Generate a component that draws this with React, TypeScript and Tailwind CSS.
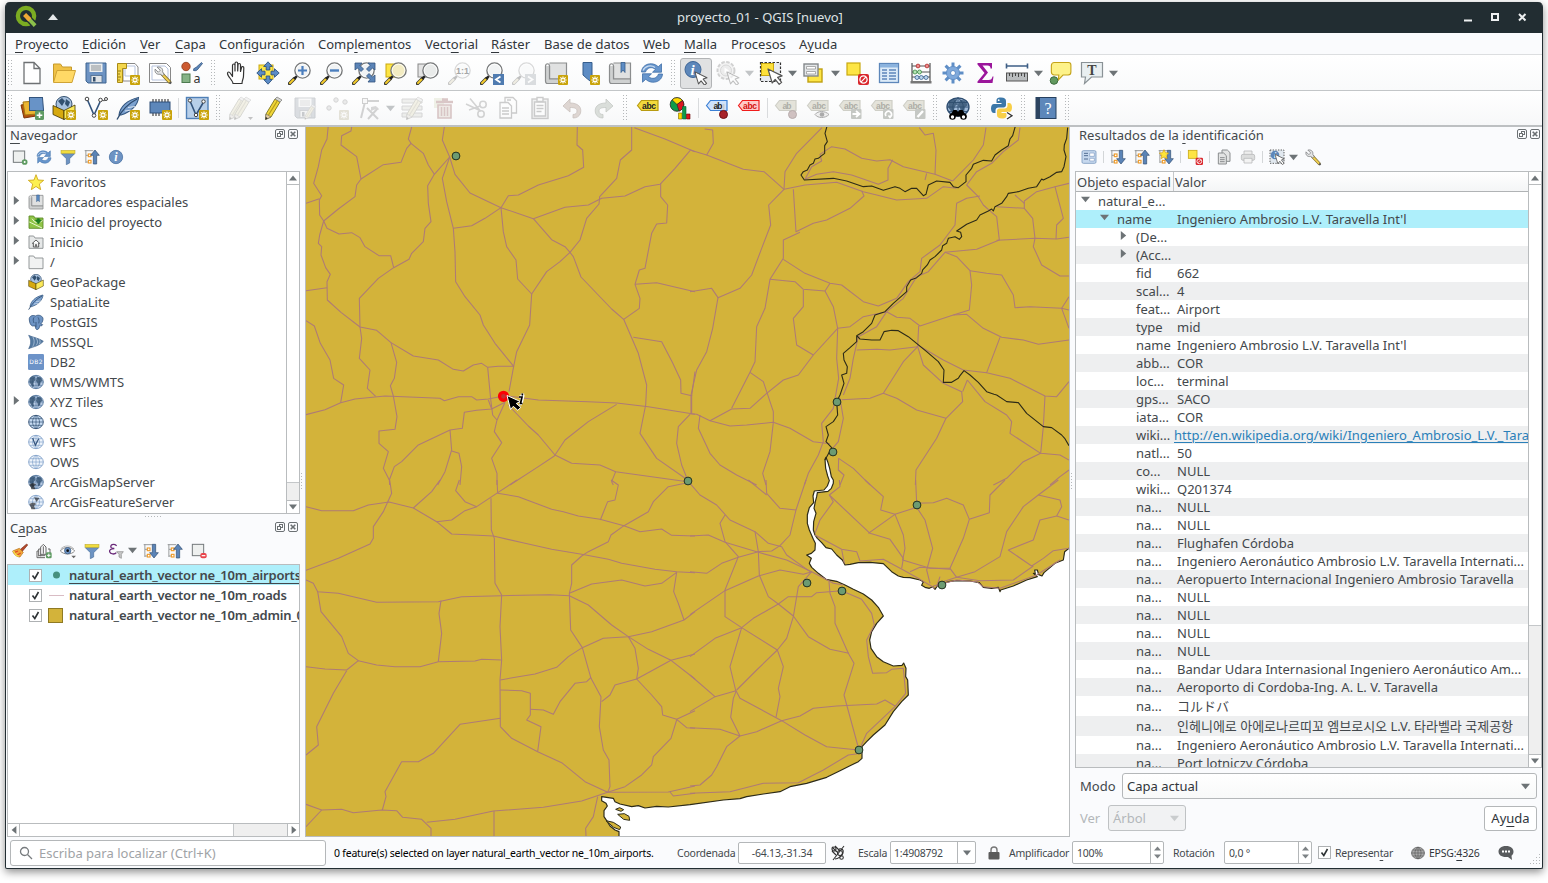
import React from "react";

/* ---------- helpers ---------- */

const Mn = ({ t }: { t: string }) => {
  const i = t.indexOf("&");
  if (i < 0) return <>{t}</>;
  return (
    <>
      {t.slice(0, i)}
      <span className="underline decoration-1 underline-offset-[3px]">{t[i + 1]}</span>
      {t.slice(i + 2)}
    </>
  );
};

const Star = () => (
  <g>
    <rect x="14" y="14" width="10" height="10" rx="1" fill="#c9a40b" />
    <path d="M19 15.400v7.200M15.400 19h7.200M16.400 16.400l5.200 5.200M21.600 16.400l-5.200 5.200" stroke="#fff" strokeWidth="1.200" />
    <circle cx="19" cy="19" r="1" fill="#c9a40b" />
  </g>
);

const Lens = ({ fill = "#f1f3f4" }: { fill?: string }) => (
  <g>
    <path d="M1.500 22.500l5-5" stroke="#3a3a30" strokeWidth="3.400" strokeLinecap="round" />
    <path d="M2 22l4-4" stroke="#f5cc2b" strokeWidth="2" strokeLinecap="round" />
    <path d="M6 18l3-3" stroke="#222" strokeWidth="2.400" />
    <circle cx="14.500" cy="9.500" r="7.600" fill={fill} stroke="#77797a" strokeWidth="1.400" />
    <circle cx="14.500" cy="9.500" r="6.300" fill="none" stroke="#fff" strokeWidth="0.800" />
  </g>
);

const Globe = ({ land = true, fill = "#b9cce4", line = "#55779f" }: { land?: boolean; fill?: string; line?: string }) => (
  <g>
    <ellipse cx="12" cy="12" rx="11" ry="10" fill={fill} stroke={line} strokeWidth="1.300" />
    <path d="M1 12h22M3 7h18M3 17h18M12 2v20M12 2c-7 5-7 15 0 20M12 2c7 5 7 15 0 20" fill="none" stroke={line} strokeWidth="1" />
    {land && (
      <path
        d="M3 6l4-3 4 1-1 3 2 2-3 2-1 4 1 3-2 2-3-5-2-3zM14 4l5 1 3 5-3 2-1 5-3 1-1-5-2-3z"
        fill="#31506f"
        opacity=".8"
      />
    )}
  </g>
);

const Arrow = ({ x = 0, y = 0 }: { x?: number; y?: number }) => (
  <path
    transform={`translate(${x} ${y})`}
    d="M8 8l4.200 14 3-3.600 4 5 2.400-2-4-5 4.500-1.500z"
    fill="#fff"
    stroke="#555"
    strokeWidth="1.200"
    strokeLinejoin="round"
  />
);

const Abc = ({ t = "abc", fill = "#f3d93c", stroke = "#b89b10", color = "#222" }) => (
  <g>
    <path d="M1.500 9.500l4-5h16.500v10h-16.500z" fill={fill} stroke={stroke} strokeWidth="1.200" />
    <text x="13" y="12.700" fontSize="8.500" fontWeight="700" fill={color} textAnchor="middle" fontFamily="Liberation Sans, sans-serif" textLength={t === "abc" ? 14 : 9}>
      {t}
    </text>
  </g>
);
const FadedAbc = ({ t = "abc" }) => <Abc t={t} fill="#e4e3da" stroke="#cfcfc7" color="#adada6" />;

const Floppy = () => (
  <g>
    <path d="M2 2h20v20h-18l-2-2z" fill="#6d93c3" stroke="#3e648f" />
    <rect x="5.500" y="2.500" width="13" height="8.500" fill="#eceeee" />
    <path d="M7 5h10M7 7h10M7 9h10" stroke="#8b9196" strokeWidth="1" />
    <rect x="7" y="14.500" width="11" height="7" fill="#dfe3e6" stroke="#4c6a8c" strokeWidth=".8" />
    <rect x="9" y="16" width="2.500" height="4.500" fill="#354f6c" />
  </g>
);

const Refresh = () => (
  <g>
    <path d="M1.500 11c.3-5.500 5-8.500 10-8.200 2.800.2 5 1.200 6.700 3l3.300-3v8.400h-9l3-2.900c-3.800-3-8.500-1.800-10 2.700z" fill="#6795cc" stroke="#3f6fa8" strokeWidth=".8" />
    <path d="M22.500 13c-.3 5.500-5 8.500-10 8.200-2.800-.2-5-1.200-6.700-3l-3.300 3v-8.400h9l-3 2.900c3.800 3 8.500 1.800 10-2.700z" fill="#6795cc" stroke="#3f6fa8" strokeWidth=".8" />
    <path d="M3 9.500c2-4.500 8-6 12-3" fill="none" stroke="#c9dcf1" strokeWidth="1.200" />
  </g>
);

const Pencil = ({ x = 0 }: { x?: number }) => (
  <g transform={`translate(${x} 0)`}>
    <path d="M5 18l9-15 5 3-9 15-5.500 2.500z" fill="#f1d638" stroke="#7a7420" strokeWidth=".9" />
    <path d="M14 3l2-2 5 3-2 2z" fill="#d7d7d2" stroke="#777" strokeWidth=".7" />
    <path d="M7.500 19l9-14.500" stroke="#b39b1b" strokeWidth="1.200" />
    <path d="M5 18l5 3-5.500 2.500z" fill="#e8cfa0" stroke="#666" strokeWidth=".6" />
    <path d="M4.500 23.500l.3-2.500 2 1.300z" fill="#222" />
  </g>
);

const Feather = () => (
  <g>
    <path d="M3 19C4 11 11 4 22.500 1.500 22 9 15 16 5 19z" fill="#7ba1cf" stroke="#33567f" strokeWidth="1.100" />
    <path d="M1 23.500C6 14 13 7 21 3" fill="none" stroke="#2c4a6e" strokeWidth="1.300" />
    <path d="M9 15l7-1M12 11.500l7-1" stroke="#fff" strokeWidth=".7" />
  </g>
);

const Box = () => (
  <g>
    <ellipse cx="12" cy="8" rx="8" ry="7.500" fill="#a8c1de" stroke="#33506f" />
    <path d="M6 5l4-3 3 3-3 5zM14 3l4 3-2 5-3-3z" fill="#32506f" />
    <path d="M1 9.500L12 14.500V23.500L1 18.500z" fill="#d6a90f" stroke="#403400" strokeWidth=".8" />
    <path d="M23 9L12 14.500V23.500L23 18z" fill="#fbe95a" stroke="#403400" strokeWidth=".8" />
  </g>
);

const Funnel = () => (
  <g>
    <path d="M2 7l7.500 7.500v9l5-2.500v-6.500L22 7z" fill="#6d93c3" stroke="#4a6f9c" strokeWidth="1" />
    <rect x="1.500" y="2" width="21" height="4.500" fill="#f0dc3e" stroke="#b9a52b" strokeWidth=".8" />
  </g>
);

const TreeLines = () => (
  <g>
    <path d="M1 2.500h13M2.800 2v19M3 9.500h4M3 19.500h4" stroke="#8a8d8f" strokeWidth="1.300" fill="none" />
    <rect x="6.500" y="7.500" width="4" height="4" fill="#fff" stroke="#ef9b28" strokeWidth="1.700" />
    <rect x="6.500" y="17" width="4" height="4" fill="#fff" stroke="#ef9b28" strokeWidth="1.700" />
  </g>
);
const Up = () => <path d="M16.500 1.500l6.500 8h-4v13h-5v-13h-4z" fill="#5b84b7" stroke="#2f4c70" strokeWidth="1" />;
const Down = () => <path d="M16.500 22.500l6.500-8h-4v-12.500h-5v12.500h-4z" fill="#5b84b7" stroke="#2f4c70" strokeWidth="1" />;

const NoSign = ({ x = 0, y = 0 }) => (
  <g transform={`translate(${x} ${y})`}>
    <rect x="13" y="13" width="11" height="11" rx="2" fill="#d9262c" />
    <circle cx="18.500" cy="18.500" r="3.600" fill="none" stroke="#fff" strokeWidth="1.300" />
    <path d="M16.200 20.800l4.600-4.600" stroke="#fff" strokeWidth="1.200" />
  </g>
);

const Faded = ({ children }: { children: React.ReactNode }) => (
  <g opacity=".27" className="grayscale-[75%]">
    {children}
  </g>
);

const Book = () => (
  <g>
    <path d="M1.500 5c0-3 4-3 4 0v13h17V2h-17" fill="#e0e1e1" stroke="#8b8d8e" strokeWidth="1.200" />
    <path d="M1.500 5v15c0 2 1 2.500 2 2.500h19v-4.500H5.500V5" fill="#cfd1d1" stroke="#8b8d8e" strokeWidth="1.200" />
  </g>
);

const Wrench = () => (
  <g>
    <path d="M10.500 10.500L20 20.500" stroke="#7b6a30" strokeWidth="4.400" strokeLinecap="round" />
    <path d="M11 11L19.800 20.300" stroke="#f0cf4f" strokeWidth="2.600" strokeLinecap="round" />
    <path d="M20 20.500l2 2" stroke="#555" strokeWidth="2.500" />
    <path d="M4 1.500l4 4-2.500 2.500-4-4C.5 8 3 11.500 8 10.500l3 2 2-2-2-3C12 3 8 .5 4 1.500z" fill="#e4e5e5" stroke="#707274" strokeWidth="1" />
  </g>
);

const ICONS: Record<string, React.ReactNode> = {
  newdoc: <path d="M4 1.500h10l6 6v15H4zM14 1.500v6h6" fill="#fff" stroke="#6e7173" strokeWidth="1.300" />,
  open: (
    <g>
      <path d="M1.500 21V3h7l2 3h9v4" fill="#f0c246" stroke="#c69a2b" />
      <path d="M1.500 21.500L5 9.500h18.500L20 21.500z" fill="#ffd966" stroke="#cfa335" />
    </g>
  ),
  save: <Floppy />,
  layout: (
    <g>
      <path d="M7 2.500h12l3 3.500v14H7z" fill="#fff" stroke="#888" />
      <path d="M9 5h10v10H9z" fill="none" stroke="#b6c3dd" />
      <path d="M1.500 2.500h9v5h-4v14h-5z" fill="#f3d64d" stroke="#a88a17" />
      <path d="M2 10h3M2 13h2M2 16h3M2 19h2" stroke="#7a6410" strokeWidth=".8" />
      <Star />
    </g>
  ),
  layoutmgr: (
    <g>
      <path d="M1.500 2.500h17l4 4v15h-21z" fill="#fff" stroke="#888" />
      <path d="M4 5h13l3 3v11H4z" fill="none" stroke="#b6c3dd" />
      <g transform="translate(6 5) scale(.78)">
        <Wrench />
      </g>
    </g>
  ),
  style: (
    <g>
      <circle cx="6" cy="5.500" r="4.200" fill="#cc5a30" stroke="#8d3a1c" strokeWidth=".8" />
      <path d="M13.500 9.500c0-3 2-2.500 3-3.500L21.500 1.500l1 1L18 8c-1 1.500-2 2-4.500 1.500z" fill="#5d87ba" stroke="#33547d" strokeWidth=".8" />
      <rect x="2" y="13" width="8" height="8.500" fill="#86b386" stroke="#4c7a4f" />
      <text x="13.500" y="21.500" fontSize="12.500" fill="#333" fontFamily="Noto Sans, sans-serif">a</text>
    </g>
  ),
  pan: (
    <path
      d="M7 22.500c0-3-5.500-7-5.500-10 0-2 2-2 3 0l2 3V4.500c0-2 2.500-2 2.500 0V10 2.500c0-2 2.700-2 2.700 0V10l.3-6c0-2 2.500-2 2.500 0v6.500l1-4c.5-1.700 2.500-1 2.300.5L17.500 15c0 3-1.500 4-1.500 7.500z"
      fill="#fff"
      stroke="#333"
      strokeWidth="1.200"
      strokeLinejoin="round"
      transform="translate(2 0)"
    />
  ),
  pansel: (
    <g>
      <rect x="3" y="4" width="14" height="14" fill="#fde545" stroke="#c9a80f" />
      {[0, 90, 180, 270].map((a) => (
        <path key={a} transform={`rotate(${a} 12 12)`} d="M12 .8l4.300 4.700h-2.500v3.500h-3.600v-3.500h-2.500z" fill="#5b8bc6" stroke="#2f5380" strokeWidth=".9" />
      ))}
    </g>
  ),
  zin: (
    <g>
      <Lens />
      <path d="M14.500 5v9M10 9.500h9" stroke="#4b7ebd" strokeWidth="2.200" />
    </g>
  ),
  zout: (
    <g>
      <Lens />
      <path d="M10 9.500h9" stroke="#4b7ebd" strokeWidth="2.400" />
    </g>
  ),
  zfull: (
    <g>
      <Lens />
      {[
        [3, 2, 0],
        [23, 2, 90],
        [23, 21, 180],
      ].map(([x, y, r]) => (
        <path key={r} transform={`translate(${x} ${y}) rotate(${r})`} d="M0 0h7l-2 2.500 3.500 3.500-2.500 2.500L2.500 5 0 7z" fill="#5b84b7" stroke="#33547d" strokeWidth=".8" />
      ))}
    </g>
  ),
  zsel: (
    <g>
      <rect x="2" y="3" width="12" height="13" fill="#fde545" stroke="#c9a80f" />
      <Lens fill="#f3ecc2" />
    </g>
  ),
  zlayer: (
    <g>
      <rect x="2" y="3" width="12" height="13" fill="#e4e4e4" stroke="#888" />
      <Lens fill="#e9ebea" />
    </g>
  ),
  znative: (
    <g>
      <Faded>
        <Lens />
      </Faded>
      <text x="14.500" y="12.700" fontSize="9" fontWeight="700" textAnchor="middle" fill="#a6a6a6" fontFamily="Liberation Sans, sans-serif">1:1</text>
    </g>
  ),
  zlast: (
    <g>
      <Lens />
      <rect x="13" y="13" width="11" height="11" fill="#4f7bb0" />
      <path d="M20.500 15.500L16 18.500l4.500 3" fill="none" stroke="#fff" strokeWidth="1.800" />
    </g>
  ),
  znext: (
    <Faded>
      <Lens />
      <rect x="13" y="13" width="11" height="11" fill="#6f8fb0" />
      <path d="M16 15.500l4.500 3-4.500 3" fill="none" stroke="#fff" strokeWidth="1.800" />
    </Faded>
  ),
  newmap: (
    <g>
      <Book />
      <Star />
    </g>
  ),
  newbm: (
    <g>
      <path d="M7 1.500h9v20l-4.500-3.500L7 14z" fill="#5d8cc4" stroke="#355d8c" />
      <Star />
    </g>
  ),
  bookmarks: (
    <g>
      <Book />
      <path d="M13 1.500h4v10l-2-2.500-2 2.500z" fill="#5d8cc4" stroke="#355d8c" strokeWidth=".8" />
    </g>
  ),
  refresh: <Refresh />,
  identify: (
    <g>
      <circle cx="9" cy="8.500" r="8" fill="#5d87ba" stroke="#3d6596" />
      <text x="8.500" y="13.500" fontSize="15" fontStyle="italic" fontWeight="700" fill="#fff" textAnchor="middle" fontFamily="Liberation Serif, serif">i</text>
      <g transform="translate(4 4) scale(.86)"><Arrow /></g>
    </g>
  ),
  action: (
    <g opacity=".6">
      <circle cx="10" cy="9.500" r="8.500" fill="#ededed" stroke="#b5b5b5" strokeWidth="2" strokeDasharray="3.500 1.500" />
      <circle cx="10" cy="9.500" r="5.500" fill="#e2e2e2" stroke="#c0c0c0" />
      <path d="M8.500 6.500l4.500 3-4.500 3z" fill="#fff" />
      <g transform="translate(4 4) scale(.86)" opacity=".6"><Arrow /></g>
    </g>
  ),
  select: (
    <g>
      <rect x="1.500" y="1.500" width="20" height="19" fill="#e7eaee" stroke="#333" strokeWidth="1.200" strokeDasharray="2.500 1.500" />
      <rect x="2.500" y="2.500" width="12" height="12" fill="#fde03a" stroke="#c9a80f" />
      <Arrow x={1} y={0} />
    </g>
  ),
  selform: (
    <g>
      <rect x="6" y="8" width="14" height="13" fill="#fde545" stroke="#bfa010" strokeWidth="1.400" />
      <rect x="2" y="3" width="14" height="12" fill="#e3e6e8" stroke="#84888b" strokeWidth="1.400" />
      <path d="M4.500 5.500h9v2.500h-9zM4.500 10.500h9v2.500h-9z" fill="#fff" stroke="#999" strokeWidth=".8" />
    </g>
  ),
  desel: (
    <g>
      <rect x="2" y="2" width="13" height="12" fill="#fde545" stroke="#c9a80f" strokeWidth="1.200" />
      <NoSign />
    </g>
  ),
  table: (
    <g>
      <rect x="2.500" y="2.500" width="19" height="19" fill="#dcebf8" stroke="#5d87ba" strokeWidth="1.300" />
      <rect x="3" y="3" width="18" height="3.500" fill="#8bb3de" />
      <path d="M5 9h5M5 12h5M5 15h5M5 18h5M12 9h7M12 12h7M12 15h7M12 18h7" stroke="#5d87ba" strokeWidth="1.300" />
    </g>
  ),
  abacus: (
    <g>
      <path d="M3 2v19M21 2v19M3 5h18M3 11h18M3 16h18" stroke="#555" strokeWidth="1.200" />
      <rect x="1.500" y="20" width="21" height="2.500" fill="#777" />
      <g strokeWidth=".8">
        <g fill="#ee8d8d" stroke="#b02a2a"><circle cx="9" cy="5" r="1.900" /><circle cx="18" cy="5" r="1.900" /></g>
        <g fill="#b5e5b5" stroke="#3c8a45"><circle cx="6" cy="11" r="2" /><circle cx="10.500" cy="11" r="2" /></g>
        <g fill="#bcd6ef" stroke="#38618f"><circle cx="8" cy="16.500" r="2" /><circle cx="12.300" cy="16.500" r="2" /><circle cx="17" cy="16.500" r="2" /></g>
      </g>
    </g>
  ),
  gear: (
    <g>
      {[0, 45, 90, 135].map((a) => (
        <path key={a} transform={`rotate(${a} 12 12)`} d="M12 1.500v21" stroke="#5f8ec6" strokeWidth="3" />
      ))}
      <circle cx="12" cy="12" r="6.500" fill="#7fa9db" stroke="#5f8ec6" />
      <circle cx="12" cy="12" r="2.500" fill="#fff" stroke="#5f8ec6" />
    </g>
  ),
  sigma: <path d="M4.500 2h14.500v5.500h-1.500c0-2-1-3-3-3H9.500l5.500 7-6 7.500h6.500c2.500 0 3.500-1 4-3.500h1l-1 6.500H4.500v-1.500l7-8.500-7-8.500z" fill="#9b169b" />,
  ruler: (
    <g>
      <path d="M1.500 5h21M1.500 2.500v5M22.500 2.500v5" stroke="#3e5f86" strokeWidth="1.600" />
      <rect x="1.500" y="12" width="21" height="8" fill="#b9bcbe" stroke="#555" />
      <path d="M4.500 12v3M7.500 12v4M10.500 12v3M13.500 12v4M16.500 12v3M19.500 12v4" stroke="#444" />
    </g>
  ),
  tips: (
    <g>
      <path d="M5 1.500h15.500a2.500 2.500 0 0 1 2.500 2.500v7a3 3 0 0 1-3 3h-5.500l-5 5 .5-5h-5a3 3 0 0 1-3-3V4.500a3 3 0 0 1 3-3z" fill="#fdf289" stroke="#c4a318" strokeWidth="1.200" transform="translate(1.500 0) scale(.93 1)" />
      <circle cx="6" cy="19.500" r="3.800" fill="#62995f" stroke="#3e6d3f" />
    </g>
  ),
  textann: (
    <g>
      <path d="M1.500 1.500h21v14.500h-11l-7 6.500 1-6.500h-4z" fill="#e9eff1" stroke="#8a9296" strokeWidth="1.200" />
      <text x="12" y="13.500" fontSize="14" fontWeight="700" fill="#444" textAnchor="middle" fontFamily="Liberation Serif, serif">T</text>
    </g>
  ),
  dsm: (
    <g>
      <path d="M1 9l13-2 2 13-12 2z" fill="#b5500f" stroke="#7c3608" />
      <path d="M3 6l13-1 1 13-12 1z" fill="#eab531" stroke="#a4760f" />
      <path d="M9 2l13-1 2 13-14 1z" fill="#6893c7" stroke="#33547d" transform="rotate(4 16 8)" />
      <rect x="15" y="14.500" width="9" height="9.500" rx="1.500" fill="#5e9b62" />
      <path d="M19.500 16.500v5.500M16.700 19.200h5.600" stroke="#fff" strokeWidth="1.600" />
    </g>
  ),
  newgpkg: (
    <g>
      <Box />
      <Star />
    </g>
  ),
  newshp: (
    <g>
      <path d="M3.500 4l6.500 15L16 6" fill="none" stroke="#33547d" strokeWidth="1.600" />
      <path d="M16 5c2-2 3 1 6-1" fill="none" stroke="#555" />
      <g fill="#fff" stroke="#444"><circle cx="3" cy="3" r="1.800" /><circle cx="10" cy="19.500" r="1.800" /><circle cx="16.500" cy="4" r="1.800" /><circle cx="22" cy="3" r="1.500" /></g>
      <Star />
    </g>
  ),
  newspl: (
    <g>
      <Feather />
      <Star />
    </g>
  ),
  newmem: (
    <g>
      <path d="M5 3v4M8 3v4M11 3v4M14 3v4M17 3v4M20 3v4M5 16v4M8 16v4M11 16v4" stroke="#333" strokeWidth="1.100" />
      <rect x="2" y="6" width="20" height="11" fill="#5d87ba" stroke="#2e4f78" />
      <Star />
    </g>
  ),
  newvirt: (
    <g>
      <rect x="1.500" y="1.500" width="21.500" height="21" fill="#b7cfe9" stroke="#4f7fb6" strokeWidth="1.400" />
      <path d="M5 5l6 14L18 7" fill="none" stroke="#33547d" strokeWidth="1.600" />
      <g fill="#fff" stroke="#444"><circle cx="5" cy="4.500" r="1.700" /><circle cx="11" cy="19" r="1.700" /><circle cx="18.500" cy="5.500" r="1.700" /></g>
      <Star />
    </g>
  ),
  edits: (
    <Faded>
      <Pencil x={-4} />
      <Pencil x={1} />
      <path d="M19 21h5l-2.500 3z" fill="#333" />
    </Faded>
  ),
  edit: <Pencil />,
  saveedits: (
    <Faded>
      <Floppy />
      <g transform="translate(9 8) scale(.65)"><Pencil /></g>
    </Faded>
  ),
  addpt: (
    <Faded>
      <g fill="#bbb" stroke="#666"><circle cx="4" cy="12" r="2.200" /><circle cx="11" cy="4" r="2.200" /><circle cx="20" cy="6" r="2.200" /></g>
      <Star />
    </Faded>
  ),
  vertex: (
    <Faded>
      <path d="M4 22L8 6M8 5h14M10 12l11 11M21 12l-10 11" stroke="#666" strokeWidth="2" />
      <rect x="5.500" y="2.500" width="5" height="5" fill="#eee" stroke="#555" />
      <path d="M14 11l5-1 3 4-3-1-5 2z" fill="#777" />
    </Faded>
  ),
  multi: (
    <Faded>
      <path d="M2 3h20v4H2zM2 10h20v4H2zM2 17h20v4H2z" fill="#cbd0ab" stroke="#777" />
      <Pencil x={2} />
    </Faded>
  ),
  trash: (
    <g opacity=".26">
      <rect x="2" y="2" width="10" height="10" fill="#cbd0ab" />
      <path d="M4 6h17M10 3.500h6" stroke="#7a3030" strokeWidth="2.400" />
      <path d="M6 9h13v13H6z" fill="#cba" stroke="#7a3030" strokeWidth="1.600" />
      <path d="M9.500 11v9M12.500 11v9M15.500 11v9" stroke="#7a3030" strokeWidth="1.500" />
    </g>
  ),
  cut: (
    <g opacity=".3" fill="none" stroke="#777" strokeWidth="1.600">
      <path d="M2 8l15 7M6 2.500l10 12" />
      <circle cx="19" cy="8.500" r="3.200" />
      <circle cx="17" cy="18" r="3.200" />
      <path d="M5 14l11-4" />
    </g>
  ),
  copy: (
    <g opacity=".36" fill="#fff" stroke="#777" strokeWidth="1.300">
      <path d="M9 1.500h8l3.500 3.500v12H9z" />
      <path d="M4 6.500h8l3.500 3.500v12H4z" />
      <path d="M6 12h7M6 15h7M6 18h7M11 4h4" />
    </g>
  ),
  paste: (
    <g opacity=".36" fill="#fff" stroke="#777" strokeWidth="1.400">
      <rect x="4" y="3" width="16" height="19.500" fill="#ddd" />
      <path d="M6.500 6h11v14h-11z" />
      <path d="M9 1.500h6v4H9zM8.500 9.500h7M8.500 12.500h7M8.500 15.500h5" />
    </g>
  ),
  undo: <path d="M3 10l7-7v4c8 0 12 4 10.500 10-1 3.500-4 5-7.500 5v-3.500c3 0 4-1.500 4-3.500 0-2.500-2-3.500-7-3.500v4.500z" fill="#ded6d2" stroke="#c9c1be" strokeWidth=".8" />,
  redo: <path transform="translate(24 0) scale(-1 1)" d="M3 10l7-7v4c8 0 12 4 10.500 10-1 3.500-4 5-7.500 5v-3.500c3 0 4-1.500 4-3.500 0-2.500-2-3.500-7-3.500v4.500z" fill="#dadeda" stroke="#c5c9c5" strokeWidth=".8" />,
  label: <Abc />,
  diagram: (
    <g>
      <circle cx="9" cy="8.500" r="6.800" fill="#0f9b49" stroke="#222" strokeWidth=".8" />
      <path d="M9 8.500L4 3.800A6.800 6.800 0 0 1 14.500 4.500z" fill="#ffd800" stroke="#222" strokeWidth=".6" />
      <path d="M9 8.500L14.500 4.500A6.800 6.800 0 0 1 11 15z" fill="#dc1620" stroke="#222" strokeWidth=".6" />
      <path d="M10.500 17h3.500v6h-3.500z" fill="#ffd800" stroke="#7a6a00" strokeWidth=".6" />
      <path d="M14.500 10.500h3.500v12.500h-3.500z" fill="#0f9b49" stroke="#063" strokeWidth=".6" />
      <path d="M18.500 18h3.500v5h-3.500z" fill="#dc1620" stroke="#600" strokeWidth=".6" />
    </g>
  ),
  pinlab: (
    <g>
      <Abc t="ab" fill="#cfe2fb" stroke="#3a7fd5" />
      <path d="M18.500 8v9" stroke="#ccc" strokeWidth="2" />
      <circle cx="18.500" cy="18.500" r="4" fill="#a8232b" stroke="#6e1217" />
    </g>
  ),
  redlab: <Abc fill="#ffc9c9" stroke="#f01c1c" color="#d30f0f" />,
  l1: (
    <g>
      <FadedAbc t="ab" />
      <circle cx="18.500" cy="18.500" r="4" fill="#cfc1c1" stroke="#b8adad" />
    </g>
  ),
  l2: (
    <g>
      <FadedAbc />
      <path d="M9 18.500c3-4 10-4 14 0-4 4-11 4-14 0z" fill="#eee" stroke="#aaa" />
      <circle cx="16" cy="18.500" r="2.300" fill="#aaa" />
    </g>
  ),
  l3: (
    <g>
      <FadedAbc />
      <rect x="13" y="13" width="10.500" height="10" rx="1" fill="#c5c8c4" />
      <path d="M14.500 18h6M18 15l3.500 3-3.500 3" fill="none" stroke="#fff" strokeWidth="1.800" />
    </g>
  ),
  l4: (
    <g>
      <FadedAbc />
      <rect x="13" y="13" width="10.500" height="10" rx="1" fill="#c5c8c4" />
      <path d="M16 20a3 3 0 1 1 4.500.5M22 19l-2 2.500-1.500-2" fill="none" stroke="#fff" strokeWidth="1.600" />
    </g>
  ),
  l5: (
    <g>
      <FadedAbc />
      <rect x="13" y="13" width="10.500" height="10" rx="1" fill="#c5c8c4" />
      <path d="M15.500 21l5.500-6" stroke="#fff" strokeWidth="2.400" />
    </g>
  ),
  metasearch: (
    <g>
      <g transform="scale(1 .92)"><Globe fill="#9fbad8" line="#2e4d70" /></g>
      <path d="M3.500 20.500l4-6.500h3l1.500 2 1.500-2h3l4 6.500" fill="#000" />
      <circle cx="6.500" cy="20.500" r="3.300" fill="#000" /><circle cx="17.500" cy="20.500" r="3.300" fill="#000" />
      <circle cx="6.500" cy="21" r="1.700" fill="#fff" /><circle cx="17.500" cy="21" r="1.700" fill="#fff" />
    </g>
  ),
  python: (
    <g>
      <path d="M11 1.500c-4 0-4.500 1.500-4.500 3.500v2h5v1H4c-2 0-3 2-3 4.500S2 17 4 17h1.500v-2.500c0-2 1.200-3 3-3h5c1.500 0 2.500-1 2.500-2.500V5c0-2-1.500-3.500-5-3.500z" fill="#3b77a8" />
      <path d="M12 22.500c4 0 4.500-1.500 4.500-3.500v-2h-5v-1H19c2 0 3-2 3-4.500S21 7 19 7h-1.500v2.500c0 2-1.200 3-3 3h-5C8 12.500 7 13.500 7 15v4c0 2 1.500 3.500 5 3.500z" fill="#f8cf47" />
      <circle cx="8.700" cy="4.200" r=".9" fill="#fff" />
      <path d="M17 16.500l5 3.200-5 3.300" fill="none" stroke="#fff" strokeWidth="3" /><path d="M17 16.500l5 3.200-5 3.300" fill="none" stroke="#333" strokeWidth="1.300" />
    </g>
  ),
  help: (
    <g>
      <rect x="2" y="1.500" width="20" height="21" fill="#5d87ba" stroke="#26405f" />
      <rect x="2" y="1.500" width="4" height="21" fill="#2c4460" />
      <text x="14" y="17.500" fontSize="16" fill="#fff" textAnchor="middle" fontFamily="Liberation Serif, serif">?</text>
    </g>
  ),
  /* panel icons */
  addlayer: (
    <g>
      <rect x="2" y="3" width="17" height="17" fill="#eef0ef" stroke="#747a7c" strokeWidth="1.500" />
      <circle cx="19" cy="19.500" r="4.300" fill="#5e9b62" /><circle cx="19" cy="19.500" r="1.500" fill="#fff" />
    </g>
  ),
  filter: <Funnel />,
  collapse: (<g><TreeLines /><Up /></g>),
  expand: (<g><TreeLines /><Down /></g>),
  info: (
    <g>
      <circle cx="12" cy="12" r="10" fill="#6d93c3" stroke="#4a72a5" strokeWidth="1.200" />
      <text x="12" y="18" fontSize="18" fontStyle="italic" fontWeight="700" fill="#fff" textAnchor="middle" fontFamily="Liberation Serif, serif">i</text>
    </g>
  ),
  fav: <path d="M12 1l3 8 8.500.5-6.500 5.500 2 8.500-7-4.800-7 4.800 2-8.500L.5 9.500 9 9z" fill="#fdf04f" stroke="#cda518" strokeWidth="1.300" strokeLinejoin="round" />,
  home2: (
    <g>
      <path d="M1.500 3h7l2 3h12v15.500h-21z" fill="#8fc447" stroke="#5d8a28" strokeWidth="1.300" />
      <path d="M2 12l19 9M6 7l4 5 6 1 6-3" stroke="#eaf6cf" strokeWidth="1.500" fill="none" />
      <path d="M11 9h3v-2h3v2h3l-4.500 6z" fill="#1c7c20" stroke="#1c7c20" />
    </g>
  ),
  home: (
    <g>
      <path d="M1.500 3h7l2 3h12v15.500h-21z" fill="#e6e8e8" stroke="#8d9192" strokeWidth="1.400" />
      <path d="M6 14.500l6-5.500 6 5.500M8 13.500v6h8v-6M11 19v-3h2v3" fill="#fff" stroke="#444" strokeWidth="1.300" />
    </g>
  ),
  folder: <path d="M1.500 3h7l2 3h12v16h-21z" fill="#f1f2f2" stroke="#8d9192" strokeWidth="1.400" />,
  gpkg: <Box />,
  spl: <Feather />,
  pg: (
    <g>
      <path d="M2 9c-1-6 5-8 9-6 5-3 12 0 11.500 5-.3 4-2.500 6-3.500 7l3 1c-1 2-3 2-4.500 1.500-.5 2-.5 5-3.500 6-2 0-3-2-3-6-2 1-3 0-4 .5C3.500 17 2.500 13 2 9z" fill="#6d93c3" stroke="#33547d" strokeWidth="1.200" />
      <path d="M9 5c-2 3-1 6 0 8.500M15 5c2 3 2 6 1 9M12 12v8" stroke="#2c4a6e" strokeWidth="1.100" fill="none" />
    </g>
  ),
  mssql: (
    <g>
      <path d="M1 2c6 3 15 4 22 9C17 18 8 19 1 22c4-7 4-13 0-20z" fill="#54799f" stroke="#41648c" />
      <path d="M7 4c3 5 3 10 0 15M12 6c3 4 3 8 0 11M17 8c2 3 1 5 0 7" stroke="#c6d6ea" fill="none" strokeWidth="1" />
    </g>
  ),
  db2: (
    <g>
      <rect x="0" y="0" width="24" height="24" rx="2" fill="#6d93c8" />
      <text x="12" y="15.500" fontSize="9" fill="#fff" textAnchor="middle" fontFamily="DejaVu Sans, sans-serif" textLength="20">DB2</text>
    </g>
  ),
  wms: <Globe />,
  wcs: <Globe land={false} fill="#c6dbf2" line="#2e4d70" />,
  wfs: (<g><Globe land={false} fill="#eef4fb" line="#7fa0c8" /><path d="M7 6l4 11 5-10" stroke="#33547d" strokeWidth="1.800" fill="none" /></g>),
  ows: <Globe land={false} fill="#eef4fb" line="#7fa0c8" />,
  agm: (<g><Globe /><path d="M2 16c4-3 8-3 10 0l-3 2 2 5H5l-1-4z" fill="#222" opacity=".7" /></g>),
  agf: (<g><Globe land={false} fill="#e8f0fa" line="#7fa0c8" /><path d="M2 15c4-2 8-3 10 0l-3 3 2 5H5l-1-4zM9 5l4 7 4-6" fill="#222" opacity=".65" /></g>),
  brush: (
    <g>
      <path d="M12 10L22 1.500l1.500 1.500L15 13z" fill="#b5482a" stroke="#7d2d18" />
      <path d="M1 12l10-4 6 6-5 7C8 21 3 18 1 12z" fill="#f0a63a" stroke="#b3701a" />
      <path d="M4 14l5-2M8 18l5-3" stroke="#e34a20" strokeWidth="2" /><path d="M2 12l4 6 4 2" stroke="#f5e04a" strokeWidth="2" fill="none" />
    </g>
  ),
  group: (
    <g>
      <path d="M7 20V6l4-4 4 4v11h-8M4 20V9h3M1.500 22V12h2.500M1.500 22h12M4 19h10" stroke="#666" strokeWidth="1.500" fill="none" />
      <path d="M11 5v11M18 9h3v6" stroke="#666" strokeWidth="1.500" fill="none" />
      <rect x="15" y="14" width="8.500" height="9" rx="2" fill="#5e9b62" /><path d="M19.200 16v5M16.700 18.500h5" stroke="#fff" strokeWidth="1.500" />
    </g>
  ),
  eye: (
    <g>
      <path d="M.5 12C5 5 17 5 22 12c-5 6-16 6-21.500 0z" fill="#fff" stroke="#777" strokeWidth="1.300" />
      <path d="M1 9C6 3 16 3 21 9" stroke="#999" fill="none" />
      <circle cx="11.500" cy="11.500" r="4.800" fill="#6d93c3" stroke="#33547d" /><circle cx="11.500" cy="11.500" r="2" fill="#111" />
      <path d="M17 19h7l-3.500 4z" fill="#666" />
    </g>
  ),
  expr: (
    <g>
      <path d="M13 4C8 0 3 3 4.500 6.500c1 1.500 3 1.800 5 1.800-5 0-8 2-7 5 1 4 8 4 10 1" stroke="#6a2a7a" strokeWidth="2" fill="none" />
      <path d="M13 13h10l-3 4v6l-3.500-2v-4z" fill="#c8c8c8" stroke="#888" />
    </g>
  ),
  remove: (
    <g>
      <rect x="2" y="2" width="17" height="17" fill="#eef0ef" stroke="#747a7c" strokeWidth="1.500" />
      <rect x="14" y="15" width="9.500" height="8" rx="3" fill="#e8434a" /><path d="M16 19h5.500" stroke="#fff" strokeWidth="1.800" />
    </g>
  ),
  form: (
    <g>
      <rect x="1.500" y="2.500" width="21" height="19" rx="2" fill="#c6d8ee" stroke="#7f9cc2" strokeWidth="1.300" />
      <path d="M4.500 6.500h6M4.500 10h6M4.500 15h6" stroke="#48648a" strokeWidth="1.400" />
      <path d="M13 6h7v5h-7zM13 14h7v4h-7z" fill="#fff" stroke="#7f9cc2" />
    </g>
  ),
  expnew: (
    <g>
      <TreeLines /><Down />
      <path d="M9 1l2.300 4.500 4.700.5-3.500 3.500 1 5-4.500-2.500-4.500 2.500 1-5L2 6l4.700-.5z" fill="#fde53a" stroke="#d09a10" />
    </g>
  ),
  copydark: (
    <g fill="#e3e4e4" stroke="#8a8d8f" strokeWidth="1.500">
      <path d="M9 1.500h8l4 4v13H9z" /><path d="M3.500 6h8l4 4v12.500h-12z" /><path d="M6 13h7M6 16h7M6 19h7" />
    </g>
  ),
  print: (
    <g fill="#dcdddd" stroke="#b7b9ba" strokeWidth="1.200">
      <path d="M6 3h12v6H6z" fill="#eee" /><rect x="2" y="8" width="20" height="9" rx="2.500" /><path d="M6 14h12v7H6z" fill="#f3f3f3" />
    </g>
  ),
  idmode: (
    <g>
      <rect x="1.500" y="1.500" width="21" height="20" fill="#e1e8ef" stroke="#555" strokeWidth="1.400" strokeDasharray="2 2" />
      <circle cx="9" cy="9" r="6.500" fill="#5d87ba" />
      <text x="9" y="13.500" fontSize="12" fontStyle="italic" fontWeight="700" fill="#fff" textAnchor="middle" fontFamily="Liberation Serif, serif">i</text>
      <Arrow x={1} y={0} />
    </g>
  ),
  wrench: <Wrench />,
};

const Ic = ({ n, c = "size-6" }: { n: string; c?: string }) => (
  <svg viewBox="0 0 24 24" className={`${c} shrink-0`}>
    {ICONS[n]}
  </svg>
);

const Tri = ({ dir = "down", c = "size-2", fill = "#6d7376" }: { dir?: "down" | "up" | "left" | "right"; c?: string; fill?: string }) => {
  const d = { down: "M0 2h10l-5 6z", up: "M0 8h10L5 2z", left: "M8 0v10L2 5z", right: "M2 0v10l6-5z" }[dir];
  return (
    <svg viewBox="0 0 10 10" className={`${c} shrink-0`}>
      <path d={d} fill={fill} />
    </svg>
  );
};

const Dots = ({ rows, cols, c }: { rows: number; cols: number; c: string }) => (
  <svg viewBox={`0 0 ${cols * 3} ${rows * 3}`} className={`${c} shrink-0`}>
    {Array.from({ length: rows * cols }, (_, i) => (
      <rect key={i} x={(i % cols) * 3} y={Math.floor(i / cols) * 3} width="1" height="1" fill="#b5b8ba" />
    ))}
  </svg>
);

const Cell = ({ k }: { k: string }) => {
  if (k === "|h")
    return (
      <div className="flex h-full w-3 items-center justify-center">
        <Dots rows={9} cols={2} c="h-[27px] w-1.5" />
      </div>
    );
  if (k === "|s")
    return (
      <div className="flex h-full w-[5px] items-center justify-center">
        <div className="h-5 w-px bg-[#d9dbdd]" />
      </div>
    );
  if (k === "v" || k === "x")
    return (
      <div className="flex w-[11px] items-center justify-center">
        <Tri c="size-[9px]" fill={k === "v" ? "#6d7376" : "#c2c5c7"} />
      </div>
    );
  if (k === "identify")
    return (
      <div className="flex h-[31px] w-8 items-center justify-center rounded-[3px] border border-[#b2b4b6] bg-[#e0e1e2]">
        <Ic n={k} />
      </div>
    );
  return (
    <div className="flex w-8 items-center justify-center">
      <Ic n={k} />
    </div>
  );
};

const BAR1 =
  "newdoc open save layout layoutmgr style |h pan pansel zin zout zfull zsel zlayer znative zlast znext newmap newbm bookmarks refresh |h identify action x select v selform v desel table abacus gear sigma ruler v tips textann v".split(" ");
const BAR2 =
  "dsm newgpkg newshp newspl newmem |s newvirt |h edits edit saveedits addpt vertex x multi trash cut copy paste undo redo |h label diagram |s pinlab redlab |s l1 l2 l3 l4 l5 |h metasearch |h python |h help |h".split(" ");

const MENU: [string, string][] = [
  ["&Proyecto", "w-[67px]"],
  ["&Edición", "w-[58px]"],
  ["&Ver", "w-[35px]"],
  ["&Capa", "w-[44px]"],
  ["Con&figuración", "w-[99px]"],
  ["Comp&lementos", "w-[107px]"],
  ["Vect&orial", "w-[66px]"],
  ["&Ráster", "w-[53px]"],
  ["Base de &datos", "w-[99px]"],
  ["&Web", "w-[41px]"],
  ["&Malla", "w-[47px]"],
  ["Proce&sos", "w-[68px]"],
  ["A&yuda", "w-[60px]"],
];

const PanelTitle = ({ t, c }: { t: string; c: string }) => (
  <div className={`flex h-[18px] items-center justify-between pb-0.5 ${c}`}>
    <span>
      <Mn t={t} />
    </span>
    <svg viewBox="0 0 24 10" className="mb-0.5 h-2.5 w-6" fill="none" stroke="#6b7073">
      <rect x=".5" y=".5" width="9" height="9" rx="1.500" />
      <rect x="4.500" y="2.500" width="3" height="3" />
      <rect x="2.500" y="4.500" width="3" height="3" fill="#fff" />
      <rect x="13.500" y=".5" width="9" height="9" rx="1.500" />
      <path d="M15.700 2.700l4.600 4.600M20.300 2.700l-4.600 4.600" strokeWidth="1.600" />
    </svg>
  </div>
);

/* ---------- left docks ---------- */

const NAV: [string, string, boolean?][] = [
  ["fav", "Favoritos"],
  ["bookmarks", "Marcadores espaciales", true],
  ["home2", "Inicio del proyecto", true],
  ["home", "Inicio", true],
  ["folder", "/", true],
  ["gpkg", "GeoPackage"],
  ["spl", "SpatiaLite"],
  ["pg", "PostGIS"],
  ["mssql", "MSSQL"],
  ["db2", "DB2"],
  ["wms", "WMS/WMTS"],
  ["wms", "XYZ Tiles", true],
  ["wcs", "WCS"],
  ["wfs", "WFS"],
  ["ows", "OWS"],
  ["agm", "ArcGisMapServer"],
  ["agf", "ArcGisFeatureServer"],
];

const VScroll = ({ gap }: { gap: string }) => (
  <div className="flex w-[13px] shrink-0 flex-col border-l border-[#b9bcbe] bg-white">
    <div className="flex h-[13px] shrink-0 items-center justify-center border-b border-[#b9bcbe]">
      <Tri dir="up" />
    </div>
    <div className={gap} />
    <div className="flex-1 border-t border-[#c4c7c9] bg-[#efefef]" />
    <div className="flex h-[13px] shrink-0 items-center justify-center border-t border-[#b9bcbe]">
      <Tri />
    </div>
  </div>
);

const Check = () => (
  <svg viewBox="0 0 13 13" className="size-[13px] shrink-0">
    <rect x=".5" y=".5" width="12" height="12" fill="#fff" stroke="#aeb1b3" />
    <path d="M3.500 6.500l2.300 3 3.700-6.500" fill="none" stroke="#2e3335" strokeWidth="1.600" />
  </svg>
);

const LeftDock = () => (
  <div className="flex w-[293px] shrink-0 flex-col">
    <PanelTitle t="&Navegador" c="pl-[3px] pr-px" />
    <div className="flex h-[26px] items-center gap-2 pb-0.5 pl-[5px]">
      {["addlayer", "refresh", "filter", "collapse", "info"].map((n) => (
        <Ic key={n} n={n} c="size-4" />
      ))}
    </div>
    <div className="flex h-[343px] border border-[#b9bcbe] bg-white">
      <div className="flex-1 overflow-hidden">
        {NAV.map(([ic, t, exp]) => (
          <div key={t} className="flex h-5 items-center">
            <div className="w-5 pb-1 pl-1">{exp && <Tri dir="right" c="size-[9px]" />}</div>
            <Ic n={ic} c="size-4" />
            <span className="pl-1.5">{t}</span>
          </div>
        ))}
      </div>
      <VScroll gap="h-[297px]" />
    </div>
    <div className="flex h-1.5 items-center justify-center">
      <Dots rows={1} cols={6} c="h-[3px] w-[18px]" />
    </div>
    <PanelTitle t="C&apas" c="pl-[3px] pr-px" />
    <div className="flex h-[26px] items-center gap-2 pb-px pl-[5px]">
      {["brush", "group", "eye", "filter"].map((n) => (
        <Ic key={n} n={n} c="size-4" />
      ))}
      <div className="-mr-0.5 flex items-center gap-1">
        <Ic n="expr" c="size-4" />
        <Tri c="size-[9px]" />
      </div>
      {["expand", "collapse", "remove"].map((n) => (
        <Ic key={n} n={n} c="size-4" />
      ))}
    </div>
    <div className="flex flex-1 flex-col border border-[#b9bcbe] bg-white">
      <div className="flex-1 overflow-hidden font-semibold tracking-[-0.22px] whitespace-nowrap">
        <div className="flex h-5 items-center bg-[#aeeffb] pl-[21px]">
          <Check />
          <svg viewBox="0 0 16 16" className="ml-[7px] size-4 shrink-0">
            <circle cx="7.500" cy="8" r="3.500" fill="#46907f" />
          </svg>
          <span className="ml-1 underline decoration-1 underline-offset-[3px]">natural_earth_vector ne_10m_airports</span>
        </div>
        <div className="flex h-5 items-center pl-[21px]">
          <Check />
          <svg viewBox="0 0 16 16" className="ml-[7px] size-4 shrink-0">
            <path d="M0 8.500h15" stroke="#d9bcc4" />
          </svg>
          <span className="ml-1">natural_earth_vector ne_10m_roads</span>
        </div>
        <div className="flex h-5 items-center pl-[21px]">
          <Check />
          <div className="ml-1.5 size-[15px] shrink-0 border border-[#8f7a24] bg-[#d3b33a]" />
          <span className="ml-1.5">natural_earth_vector ne_10m_admin_0_countries</span>
        </div>
      </div>
      <div className="flex h-[13px] shrink-0 border-t border-[#b9bcbe]">
        <div className="flex w-3 items-center justify-center border-r border-[#b9bcbe]">
          <Tri dir="left" />
        </div>
        <div className="flex-1" />
        <div className="w-[54px] border-l border-[#c4c7c9] bg-[#efefef]" />
        <div className="flex w-3 items-center justify-center border-l border-[#b9bcbe]">
          <Tri dir="right" />
        </div>
      </div>
    </div>
  </div>
);

/* ---------- map ---------- */

const LAND =
  "M1160 190L1137 205 1124 215 1120 240 1095 250 1062 278 1056 288 1046 284 1042 270 1034 270 1036 282 1030 280 1042 290 1010 300 970 318 932 330 930 335 925 322 905 325 880 322 868 308 840 303 800 302 780 304 760 310 742 318 735 328 728 320 718 325 705 322 695 316 700 305 690 300 660 293 640 292 625 288 605 275 580 251 540 247 505 248 480 253 465 255 457 240 440 225 425 207 408 203 395 188 382 175 375 165 370 150 371 125 378 100 372 85 376 65 380 50 382 38 414 34 424 25 430 10 430 0 424 -10 419 -35 413 -55 408 -68 405 -62 407 -35 413 -12 418 2 412 18 402 30 373 33 369 48 371 68 358 83 352 105 352 130 358 150 370 178 376 190 375 210 364 220 350 225 364 235 358 250 365 262 385 280 408 298 440 304 465 315 490 328 520 342 545 360 565 382 580 408 560 430 545 455 539 480 543 505 560 530 580 545 610 558 636 556 641 549 648 565 647 590 653 600 655 645 635 665 610 695 585 735 550 765 530 785 516 800 516 835 505 845 480 857 450 872 410 892 350 910 300 920 270 935 220 942 170 950 150 956 100 960 0 974 -65 981 -100 979 -135 984 -155 977 -175 980 -210 972 -225 965 -230 955 -250 952 -265 950 -265 962 -252 970 -248 978 -258 992 -258 1010 -250 1022 -240 1038 -225 1050 -213 1055 -213 1100 -1200 1100 -1200 -1100 1160 -1100z";

const RA =
  "M70 0L66 42 50 75 40 125 26 175 50 212 43 225 44 270 56 288 44 330 40 355 50 365 48 390 62 428 76 448 66 470 67 525 108 562 165 606 215 616 258 653 325 693 400 705 445 733 475 738 505 720 530 715 548 727 580 724 626 724M3 235L43 221M56 288L66 310 102 327 140 323 165 338 180 365 222 392 257 392 266 428M56 288L100 252 150 215 155 180 168 162 155 95 108 60 110 32 138 18 140 6M168 162L235 119 288 112 305 70 318 55 310 42 320 6M318 55L355 85 370 120 388 148 434 96 412 45 418 6M388 148L368 182 370 235 378 290 360 310 355 350 320 385 312 403 266 428 220 460 163 520 165 606 170 640 163 700 195 735 187 790 212 814M3 497L66 488M3 587L28 603 46 655 75 705 86 760 116 780 107 833M3 869L60 854 107 833 150 822 240 813 405 820 418 827 460 815 500 815 515 825 550 822 600 812 660 820 700 825 850 830 935 834 1030 845 1170 868M258 653L275 712 268 760 256 782 265 813 276 875 270 913 222 918 222 955 250 980 235 1030 253 1065 254 1080M253 1065L268 1025 290 1010 340 960 435 915 472 910 478 862 515 856 560 852 600 832M435 915L440 975 420 1040 398 1080M440 978L462 985 470 1025 465 1080M434 96L450 148 495 204 588 248 685 281 740 344 780 365 795 382 805 395 828 456 920 552 956 583 1000 685 1025 780 1022 840 1005 925 1055 1000 1148 1065M434 96L412 160 425 230 445 310 450 380 452 470 480 515 525 570 535 600 570 655 626 724 612 800M445 310L500 302 540 280 588 248 610 212 640 210 700 180 790 152 836 127 833 75 816 60 817 6M588 248L595 320 605 365 633 405 638 462 680 507 674 600 635 680 626 724M680 507L725 440 765 410 795 382 825 345 845 280 882 237 884 215 935 160 946 105 980 75 980 6M685 281L780 247 850 240 890 220 960 213 1020 185 1065 178 1110 130 1155 77M988 8L1080 42 1170 80M1067 175L1067 215 1088 240 1085 294 1055 297 1040 325 1020 430 1003 435 990 478 1005 520 1003 550 956 583M990 478L1055 473 1170 500M985 637L1070 650 1102 712 1127 765 1128 805 1160 812 1170 740M1160 865V810M548 727L557 822 563 870 576 885 568 920 590 953 560 1000 576 1045 576 1080M560 852L550 825M600 832L576 885M610 840L670 903 700 930 750 990 800 1015 885 1020 932 1040 1148 1070M615 1080L700 1025 748 993 780 945 850 890 935 838M932 1040L920 1070 925 1080M1155 868L1120 905 1115 955 1130 1020 1148 1065";

const RB =
  "M0 75L50 90 160 133 222 140 282 193 345 180 440 172 520 200 560 210 620 225 710 220 760 185 800 190M50 90L70 55 68 15 44 12M282 193L285 140 320 85 396 8M345 163L365 125 395 108 390 88 425 65 465 72 515 100 560 108 600 104 640 125 735 148 788 168M345 163L380 148 430 140 485 150 565 178 594 165 594 130 608 104M688 8L705 30 730 25 738 75 735 148M888 8L880 60 850 105 788 168M705 165L710 145M990 8L985 45 940 80 905 115 860 140 830 180 865 215 880 240 905 262 920 275 928 345 860 373 765 382M310 193L318 320 370 295 410 285 480 250 522 213 515 197M282 193L236 240 242 300 215 370 185 450 150 490 84 518 65 490 0 500M84 518L68 610 50 680 20 735 3 810 3 865M330 322L280 345 280 400 240 463 225 550 200 605 195 710 180 742 125 850M280 403L345 445 420 475 455 480 520 530 565 543 620 520 655 470 690 440 695 400 750 360 795 300 800 235 830 220 870 213M240 463L315 470 340 493 405 498 420 475M340 495L340 545 310 580 320 660 370 690M405 498L430 545 443 610 440 700 446 760 430 850 395 895 400 950 385 990 355 1045 343 1080M443 610L370 690 325 750 280 765 230 805 180 850 125 852 60 887 20 868 0 866M443 610L480 605 520 575 590 560 620 577 660 580 690 603 790 570 830 568 880 610 935 637 1000 645 1045 658 1137 645M590 560L560 605 505 635 490 700 480 760 460 810M590 560L640 520 680 455 715 440 765 382 800 395 840 437 845 480 838 555 790 570M840 437L890 445 935 450 970 510 975 548 1020 545 1115 550 1137 555M1137 515L1115 550 1137 610M686 603L683 665 640 710 580 805 540 820 455 824M500 675L560 673 600 675 683 665 700 720 760 775 815 800 818 830 768 880 740 940 678 1035 676 1080M580 805L620 820 680 855 768 880M683 660L760 705 820 735 890 743 930 637M890 743L960 760 1065 813 1100 815 1137 770M1065 813L1060 905 1052 985 1110 990 1137 1005M832 765L885 830 950 870 965 890 960 925 1052 985 1000 1010 950 1060 910 1080M832 765L818 800M920 346L1035 340 1100 342 1137 337M1035 340L1030 365 1055 420 1110 453 1137 453M1035 340L1028 280 1003 250 920 245M1003 250L1003 228 1040 200 1095 185 1137 175M975 210L1003 235M1095 185L1120 280 1100 300 1098 342M180 742L220 770 250 860 250 892 240 980 218 1045 228 1080M60 887L120 903 170 900 250 892 300 910 370 950 420 956M30 870L25 910 60 985 90 1020 140 1050 200 1080M450 820L460 880 445 950 428 970M446 1000L445 1035 462 1050 450 1080M446 1000L490 1030 540 1080M1137 1035L1110 1055 1080 1080";

const RC =
  "M3 80L50 92 145 92 190 75 252 66 325 84 395 125 440 162 565 168 660 190 740 208 830 223 910 238 950 250 1050 268 1115 275 1170 278M254 0L260 40 235 95 205 140 205 175 195 192 100 235 3 271M325 84L380 35 405 0M463 0L452 32 480 65 515 80M395 125L440 120 480 92 515 80 575 40 636 0M576 0L578 40 640 50 740 88 775 95 820 108 885 118 957 137 1005 155 1070 147 1100 166 1170 168M558 55L559 150 568 175 570 310 590 345 585 440 590 540 585 600 586 740M918 0L940 15 930 60 908 65 886 120M957 137L1030 95 1045 65 1090 20 1140 10M957 137L918 165 910 185 850 215 830 228 800 255 800 310 793 340 797 450 832 503 858 595 888 650 883 740 895 810 912 840 915 920 908 937M3 300L25 310 38 335 100 340 215 367 400 365 470 350 590 347 735 344 793 347M38 335L48 395 110 470 130 520 160 542M3 560L60 567 125 570 160 542 215 555 270 560 345 560 400 545 510 543 530 538 590 540M125 572L85 640 60 690 35 740 40 795 3 825M408 362L402 400 410 460 400 545M586 600L640 590 690 582 755 562 790 530 832 503 895 475 970 470 1040 455 1137 420 1170 395M586 630L650 632 676 640 676 705 665 720 708 740 698 815M676 688L715 690 745 703 765 665 810 610 845 605 858 592M586 740L620 775 698 815 770 848 840 905 908 937M586 715L465 733 385 820 340 845 290 845 240 935 243 950 232 990M3 973L50 990 110 988 145 998 230 990 275 992 293 1012 350 1018 378 1045 378 1068M50 990L3 1040M365 1027L450 1018 565 993 715 982 830 963 908 937 1090 936 1170 918M1095 936L1105 948 1170 940M567 993V1068M878 950L865 1010 842 1045 843 1068M793 340L860 312 950 300 1020 318 1070 310 1115 277 1106 335 1120 370 1137 420M793 347L850 375 920 435 970 470 990 505 1000 565 995 597 930 615 915 645 890 665M970 470L1030 508 1098 541 1170 597M995 597L1098 541 1170 522M995 597L1040 645 1070 680 1073 705 1115 718 1145 743 1170 745M1115 718L1170 692M1115 720L1098 775 1045 830 1040 855 1010 885 960 920 908 937";

const RD =
  "M0 10L30 45 80 75 120 120 195 155 235 190 275 200 290 225 360 275M105 105L90 130 105 185 145 230 105 330 105 410 155 443M0 168L55 165 105 187 200 215 245 213 270 197 300 165 318 90 348 0M318 90L270 85 230 40 228 0M175 0L230 45M195 155L205 215 208 285 235 350 265 372 310 408 355 470 420 508 477 520M0 275L50 280 95 250 145 232 205 215M205 217L290 240 365 275 430 310 460 315M0 404L105 332 205 288 270 270 340 283 365 275M365 275L325 320 310 410 290 475 262 510 200 570 140 630M0 530L75 475 155 443 190 415 265 372 295 350 365 350 380 338 455 332 515 358 545 400 553 435 530 480 535 530 548 580 590 578 605 568 640 565 647 640 615 680 530 760 510 805M155 443L262 510 280 560 265 625 270 650 258 712M155 443L120 560 138 635 130 655 122 712 150 768M0 585L75 650 138 632 150 655 275 722 330 708 370 685 440 678 560 672 585 660 615 678M0 695L75 650M0 743L90 748 150 768 200 755 275 722M275 722L345 765 410 800 505 810M150 768L110 800 80 860 65 885 30 915 0 918M417 305L420 340 435 380 435 430 475 520 492 550 462 645 507 810M0 940L120 935 220 910 325 908 400 870 475 825 515 820M448 0L450 20 418 45 540 160 600 178 640 235 635 265M418 45L430 65 390 120 375 160M375 165L455 208 500 215 510 243 580 238 640 270 690 298 735 325M455 208L463 250M535 160L615 103 680 82 705 120 728 205 710 270 720 310M525 0L580 50 572 90 615 103 640 165 645 205 638 240 720 265 780 265 800 292M677 0L680 70 730 68 770 55 820 75 838 118 820 175 780 265M838 118L898 98 900 45 945 0M1105 0L1045 45 1000 80 950 155 930 230 855 275 800 292 745 310M1045 45L1110 60 1115 80 1100 108 1050 120 1030 180 955 210 1025 258 1060 235 1090 212 1137 205M1100 108L1137 120M1030 258L970 300 870 302 800 292M660 275L690 262 780 268M740 320L750 290M730 318L800 300 860 305 880 320 930 325 1040 285 1110 240";

const BORDERS_B =
  "M412 0L405 25 412 50 404 62 404 85 395 92 385 100 375 102 370 115 360 120 352 135 340 140 333 150 343 165 430 160 470 168 520 185 545 183 580 196 615 185 630 190 645 200 665 190 680 190 700 212 708 208 715 180 740 168 780 172 790 185 805 188 828 170 828 150 845 130 850 118 880 106 905 108 915 90 935 75 955 62 960 42 968 32 977 0M1133 8L1130 40 1123 60 1122 75 1128 95 1122 125 1115 140 1100 142 1080 155 1060 165 1055 162 1040 185 1015 190 985 200 955 205 950 215 935 235 915 245 910 258 905 252 895 258 870 270 860 285 830 298 800 318 812 322 815 335 808 343 795 335 775 340 770 355 758 362 755 375 735 395 720 405 712 420 698 435 695 445 680 458 662 465 650 485 650 500 610 535 585 560 555 570 545 595 520 620 500 632 500 650 480 668 460 685 462 705 472 725 470 745 455 750 462 775 450 810 440 830 443 870 430 890 408 905 415 930 408 950 425 968 405 1005M500 632L510 642 545 645 570 645 582 620 605 616 625 617 655 635 710 680 745 710 762 735 760 772 785 772 805 760 810 752 822 737 840 750 865 772 890 800 912 808 920 810 950 830 985 833 1010 865 1060 905 1085 908 1115 930 1124 940 1137 962";

const AIRPORTS = [
  [456, 156], [837, 402], [833, 452], [688, 481], [917, 505], [807, 583], [842, 591], [942, 585], [859, 750],
];

const ROADS: [string, string][] = [
  ["translate(305 125) scale(.33333)", RA],
  ["translate(690 125) scale(.33333)", RB],
  ["translate(305 480) scale(.33333)", RC],
  ["translate(690 480) scale(.33333)", RD],
];

const MapCanvas = () => (
  <svg viewBox="306 127 763 709" className="h-[709px] w-[763px] shrink-0 bg-white">
    <g transform="translate(690 480) scale(.33333)">
      <path d={LAND} fill="#d3b33a" stroke="#2c2a18" strokeWidth="3.500" strokeLinejoin="round" />
      <g transform="translate(-1155 0)" fill="#d3b33a" stroke="#2c2a18" strokeWidth="3">
        <path d="M932 988l12-5 12 6-8 5z" />
        <path d="M938 1003l20-2 14 8 2 12-18-3z" />
        <path d="M903 1022l22 5 22 14-3 8-18-7z" />
      </g>
    </g>
    {ROADS.map(([tf, d]) => (
      <g key={tf} transform={tf} fill="none" stroke="#ae7b76" strokeWidth="3.200" strokeLinejoin="round">
        {d.split("M").filter(Boolean).map((s, i) => (
          <path key={i} d={`M${s}`} />
        ))}
      </g>
    ))}
    <path transform="translate(690 125) scale(.33333)" d={BORDERS_B} fill="none" stroke="#2c2a18" strokeWidth="3.300" strokeLinejoin="round" />
    {AIRPORTS.map(([x, y]) => (
      <circle key={x} cx={x} cy={y} r="3.900" fill="#6c9b72" stroke="#22301f" />
    ))}
    <circle cx="503.500" cy="396.300" r="4" fill="#c33030" stroke="#fb0006" strokeWidth="3.200" />
    <path d="M507 395.500l3.500 14 2.800-3.200 4.500 4 3-3-4.500-3.800 4-2z" fill="#000" stroke="#fff" strokeWidth="1" />
    <path d="M519.500 397h3l-1.500 6.500h1M522.500 393.500v2" stroke="#fff" strokeWidth="3.400" fill="none" />
    <path d="M519 397h3l-1.500 6.500h2M522.500 393.500l-.3 2" stroke="#000" strokeWidth="1.700" fill="none" />
  </svg>
);

/* ---------- identify results ---------- */

const RESULTS: [string, string][] = [
  ["(De...", ""],
  ["(Acc...", ""],
  ["fid", "662"],
  ["scal...", "4"],
  ["feat...", "Airport"],
  ["type", "mid"],
  ["name", "Ingeniero Ambrosio L.V. Taravella Int'l"],
  ["abb...", "COR"],
  ["loc...", "terminal"],
  ["gps...", "SACO"],
  ["iata...", "COR"],
  ["wiki...", "http://en.wikipedia.org/wiki/Ingeniero_Ambrosio_L.V._Taravella"],
  ["natl...", "50"],
  ["co...", "NULL"],
  ["wiki...", "Q201374"],
  ["na...", "NULL"],
  ["na...", "NULL"],
  ["na...", "Flughafen Córdoba"],
  ["na...", "Ingeniero Aeronáutico Ambrosio L.V. Taravella Internati..."],
  ["na...", "Aeropuerto Internacional Ingeniero Ambrosio Taravella"],
  ["na...", "NULL"],
  ["na...", "NULL"],
  ["na...", "NULL"],
  ["na...", "NULL"],
  ["na...", "Bandar Udara Internasional Ingeniero Aeronáutico Am..."],
  ["na...", "Aeroporto di Cordoba-Ing. A. L. V. Taravella"],
  ["na...", "コルドバ"],
  ["na...", "인헤니에로 아에로나르띠꼬 엠브로시오 L.V. 타라벨라 국제공항"],
  ["na...", "Ingeniero Aeronáutico Ambrosio L.V. Taravella Internati..."],
  ["na...", "Port lotniczy Córdoba"],
];

const RSep = () => <div className="mx-1 h-3 w-px bg-[#d3d6d8]" />;

const RightDock = () => (
  <div className="flex w-[467px] shrink-0 flex-col">
    <PanelTitle t="Resultados de la &identificación" c="pl-1 pr-px" />
    <div className="flex h-[26px] items-center pb-0.5 pl-[6px]">
      <Ic n="form" c="size-4" />
      <div className="flex w-[13px] justify-center"><RSep /></div>
      <div className="flex items-center gap-2">
        <Ic n="expand" c="size-4" />
        <Ic n="collapse" c="size-4" />
        <Ic n="expnew" c="size-4" />
      </div>
      <div className="flex w-[13px] justify-center"><RSep /></div>
      <Ic n="desel" c="size-4" />
      <div className="flex w-[13px] justify-center"><RSep /></div>
      <Ic n="copydark" c="size-4" />
      <Ic n="print" c="ml-2 size-4" />
      <div className="flex w-[13px] justify-center"><RSep /></div>
      <Ic n="idmode" c="size-4" />
      <Tri c="ml-1 size-[9px]" />
      <Ic n="wrench" c="ml-[7px] size-[17px]" />
    </div>
    <div className="flex h-[597px] shrink-0 border border-[#b9bcbe] bg-white">
      <div className="flex-1 overflow-hidden whitespace-nowrap">
        <div className="flex h-5 items-center border-b border-[#b0b3b5] bg-gradient-to-b from-white to-[#f4f5f6]">
          <div className="h-full w-[98px] border-r border-[#c5c8ca] pl-px leading-[20px]">Objeto espacial</div>
          <span className="pl-px">Valor</span>
        </div>
        <div className="flex h-[18px] items-center pl-[5px]">
          <Tri c="mb-[3px] size-[9px]" />
          <span className="pl-2">natural_e...</span>
        </div>
        <div className="flex h-[18px] items-center bg-[#aeeffb] pl-6">
          <Tri c="mb-[3px] size-[9px]" />
          <span className="w-[68px] pl-2">name</span>
          <span>Ingeniero Ambrosio L.V. Taravella Int'l</span>
        </div>
        {RESULTS.map(([k, v], i) => {
          const tall = i === 26 || i === 27;
          return (
            <div key={i} className={`flex items-center ${tall ? "h-5" : "h-[18px]"} ${i % 2 ? "bg-[#eeeff0]" : "bg-white"}`}>
              <div className="flex w-[60px] shrink-0 items-center pl-[43px]">{k[0] === "(" && <Tri dir="right" c="mb-1 size-[9px]" />}</div>
              <span className="w-[41px] shrink-0">{k}</span>
              {v.startsWith("http") ? <span className="-ml-[3px] text-[#2a80b9] underline decoration-1 underline-offset-2">{v}</span> : <span>{v}</span>}
            </div>
          );
        })}
      </div>
      <VScroll gap="h-[440px]" />
    </div>
    <div className="mt-[5px] flex h-[26px] items-center pl-[5px]">
      <span className="w-[42px]">Modo</span>
      <div className="flex h-[26px] w-[415px] items-center justify-between rounded-[3px] border border-[#b4b7b9] bg-gradient-to-b from-white to-[#f8f9f9] pr-1.5 pl-1">
        <span className="text-[#31363b]">Capa actual</span>
        <Tri c="size-[9px]" />
      </div>
    </div>
    <div className="mt-1.5 flex h-[26px] items-center pl-[5px] text-[#b3b7ba]">
      <span className="w-7">Ver</span>
      <div className="flex h-[26px] w-[78px] items-center justify-between rounded-[3px] border border-[#bfc2c4] bg-[#f1f2f3] pr-1.5 pl-1">
        <span>Árbol</span>
        <Tri c="size-[9px]" fill="#c9cccd" />
      </div>
      <div className="ml-auto mr-[5px] flex h-[25px] w-[53px] items-center justify-center rounded-[3px] border border-[#b4b7b9] bg-white text-[#31363b]">
        <span>
          <Mn t="Ay&uda" />
        </span>
      </div>
    </div>
  </div>
);

/* ---------- status bar ---------- */

const Spin = ({ v, c }: { v: string; c: string }) => (
  <div className={`flex h-[23px] rounded-[2px] border border-[#b4b7b9] bg-white ${c}`}>
    <span className="flex-1 self-center pl-1">{v}</span>
    <div className="flex w-[13px] flex-col items-center justify-between border-l border-[#b4b7b9] py-[3px]">
      <Tri dir="up" c="size-[7px]" fill="#7d8285" />
      <Tri c="size-[7px]" fill="#7d8285" />
    </div>
  </div>
);

const StatusBar = () => (
  <div className="flex h-[31px] items-center pl-1 text-[10.5px] tracking-[-0.22px] whitespace-nowrap">
    <div className="mt-px flex h-[26px] w-[316px] shrink-0 items-center rounded-[3px] border border-[#b4b7b9] bg-white pl-2 text-[13px] tracking-normal text-[#9fa3a6]">
      <svg viewBox="0 0 14 14" className="mr-1.5 size-[14px]" fill="none" stroke="#777b7e" strokeWidth="1.300">
        <circle cx="5.500" cy="5.500" r="4" />
        <path d="M8.500 8.500l4.500 4.500" />
      </svg>
      Escriba para localizar (Ctrl+K)
    </div>
    <span className="ml-2 w-[343px] shrink-0 text-black">0 feature(s) selected on layer natural_earth_vector ne_10m_airports.</span>
    <span className="w-[61px] shrink-0">Coordenada</span>
    <div className="flex h-[22px] w-[88px] shrink-0 items-center justify-center rounded-[2px] border border-[#b4b7b9] bg-white">-64.13,-31.34</div>
    <svg viewBox="0 0 16 16" className="ml-1 size-4 shrink-0" fill="none" stroke="#333" strokeWidth="1.100">
      <path d="M2 2l5 5M5 1l5 5M2 6l4 4M14 1L3 15M9 4c3-1 5 1 4 4s-5 6-8 6" />
      <circle cx="10" cy="8" r="2.500" />
      <circle cx="4" cy="4" r="2" />
      <circle cx="11.500" cy="12.500" r="1.800" />
    </svg>
    <span className="ml-3 w-8 shrink-0">Escala</span>
    <div className="flex h-[23px] w-[86px] shrink-0 items-center rounded-[2px] border border-[#b4b7b9] bg-white">
      <span className="flex-1 pl-[3px]">1:4908792</span>
      <div className="flex h-full w-[18px] items-center justify-center border-l border-[#b4b7b9]">
        <Tri />
      </div>
    </div>
    <svg viewBox="0 0 12 14" className="ml-3 h-3.5 w-3 shrink-0">
      <path d="M3 7V4a3 3 0 0 1 6 0v3" fill="none" stroke="#777" strokeWidth="1.400" />
      <rect x=".5" y="6" width="11" height="7.500" rx="1" fill="#5b5b5b" />
    </svg>
    <span className="ml-[9px] w-[63px] shrink-0">Amplificador</span>
    <Spin v="100%" c="w-[92px] shrink-0" />
    <span className="ml-[9px] w-[51px] shrink-0">Rotación</span>
    <Spin v="0,0 °" c="w-[88px] shrink-0" />
    <div className="ml-1.5">
      <Check />
    </div>
    <span className="ml-1 w-[76px] shrink-0">
      <Mn t="Represen&tar" />
    </span>
    <svg viewBox="0 0 24 24" className="size-3.5 shrink-0">
      <Globe land={false} fill="#aaa" line="#555" />
    </svg>
    <span className="ml-1 w-[69px] shrink-0 text-[#31363b]">
      <Mn t="EPSG:&4326" />
    </span>
    <svg viewBox="0 0 16 14" className="h-3.5 w-4 shrink-0">
      <path d="M8 0c5 0 7.500 2.500 7.500 5.500 0 2-.8 3.500-2 4.300L14 14l-4-3H8C3 11 .5 8.500.5 5.500S3 0 8 0z" fill="#595c5e" />
      <path d="M4 5.500h2M7 5.500h2M10 5.500h2" stroke="#fff" strokeWidth="1.800" />
    </svg>
    <svg viewBox="0 0 12 12" className="mt-auto mb-0.5 ml-4 size-3 shrink-0" fill="#b5b8ba">
      {[[9, 0], [9, 3], [6, 3], [9, 6], [6, 6], [3, 6], [9, 9], [6, 9], [3, 9], [0, 9]].map(([x, y]) => (
        <rect key={`${x}-${y}`} x={x} y={y} width="1" height="1" />
      ))}
    </svg>
  </div>
);

export default function App() {
  return (
    <div className="h-[883px] w-[1548px] overflow-hidden bg-white pt-0.5 pl-[5px] font-['Noto_Sans','Noto_Sans_CJK_KR','Noto_Sans_CJK_JP',sans-serif] text-[13px] leading-[18px] text-[#43484c]">
      <div className="flex h-[867px] w-[1538px] flex-col rounded-t-[5px] rounded-b-[2px] border-r border-b border-l border-[#222d32] bg-[#fafbfd] shadow-[0_3px_8px_rgba(0,0,0,0.45)]">
        <div className="flex h-[31px] shrink-0 items-center rounded-t-[4px] bg-[#222d32] pb-0.5">
          <svg viewBox="0 0 24 24" className="ml-[9px] size-[23px]">
            <circle cx="11.500" cy="11.500" r="8.500" fill="none" stroke="#7cac22" strokeWidth="4.500" />
            <path d="M13 13l9 9.500" stroke="#222d32" strokeWidth="7" />
            <path d="M13 13l8 8.500" stroke="#8cc04b" strokeWidth="4" />
            <path d="M10 10l5.500 5.500" stroke="#f0a735" strokeWidth="4.500" />
          </svg>
          <Tri dir="up" c="ml-2.5 size-[10px]" fill="#e5e8ea" />
          <span className="flex-1 pr-px text-center text-[#dfe3e6]">proyecto_01 - QGIS [nuevo]</span>
          <svg viewBox="0 0 66 12" className="h-3 w-[66px]" fill="none" stroke="#eef0f1" strokeWidth="2">
            <path d="M1 9.500h8" />
            <rect x="29" y="3" width="6" height="6" />
            <path d="M56 3l6.500 6.500M62.500 3L56 9.500" />
          </svg>
          <div className="w-[13px]" />
        </div>
        <div className="flex h-[22px] shrink-0 items-center border-b border-[#dcdee0] pl-[9px] whitespace-nowrap text-[#31363b]">
          {MENU.map(([t, w]) => (
            <div key={t} className={w}>
              <Mn t={t} />
            </div>
          ))}
        </div>
        <div className="flex h-[36px] shrink-0 items-center border-b border-[#c3c6c8] bg-gradient-to-b from-white to-[#f9fafb] pt-px">
          <div className="flex w-2.5 justify-center">
            <Dots rows={9} cols={2} c="h-[27px] w-1.5" />
          </div>
          {BAR1.map((k, i) => (
            <Cell key={i} k={k} />
          ))}
        </div>
        <div className="flex h-[36px] shrink-0 items-center border-b-2 border-[#bdc0c2] bg-gradient-to-b from-white to-[#f7f8f9]">
          <div className="flex w-2.5 justify-center">
            <Dots rows={9} cols={2} c="h-[27px] w-1.5" />
          </div>
          {BAR2.map((k, i) => (
            <Cell key={i} k={k} />
          ))}
        </div>
        <div className="flex h-[710px] shrink-0 pl-px">
          <LeftDock />
          <div className="flex w-[5px] items-center justify-center">
            <Dots rows={6} cols={1} c="h-[18px] w-[3px]" />
          </div>
          <div className="border-r border-b border-l border-[#b9bcbe]">
            <MapCanvas />
          </div>
          <div className="flex w-[5px] items-center justify-center">
            <Dots rows={6} cols={1} c="h-[18px] w-[3px]" />
          </div>
          <RightDock />
        </div>
        <StatusBar />
      </div>
    </div>
  );
}
